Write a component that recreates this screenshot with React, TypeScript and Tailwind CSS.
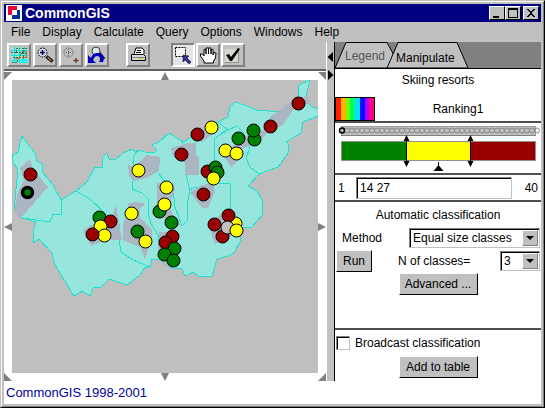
import React from "react";

const RED = "#990000";
const GREEN = "#008000";
const YELLOW = "#ffff00";

const menus = ["File", "Display", "Calculate", "Query", "Options", "Windows", "Help"];

const raised = "border-2 border-t-white border-l-white border-r-[#808080] border-b-[#808080] bg-[#c0c0c0]";
const pushButton =
  "flex h-[22px] items-center justify-center border border-t-white border-l-white border-r-black border-b-black bg-[#c0c0c0] px-1 whitespace-nowrap";
const sunken =
  "border border-t-[#808080] border-l-[#808080] border-r-[#c0c0c0] border-b-[#c0c0c0] bg-white shadow-[inset_1px_1px_0_black]";

const dots: [number, number, string][] = [
  [30, 174, RED],
  [99, 217, GREEN],
  [110, 221, RED],
  [100, 226, YELLOW],
  [104, 235, YELLOW],
  [92, 234, RED],
  [131, 213, YELLOW],
  [137, 231, GREEN],
  [145, 241, YELLOW],
  [138, 170, YELLOW],
  [166, 187, YELLOW],
  [159, 211, GREEN],
  [164, 204, YELLOW],
  [171, 222, GREEN],
  [172, 236, RED],
  [165, 242, RED],
  [174, 248, GREEN],
  [164, 254, GREEN],
  [173, 260, GREEN],
  [181, 154, RED],
  [197, 134, RED],
  [211, 127, YELLOW],
  [238, 138, GREEN],
  [254, 139, GREEN],
  [253, 130, GREEN],
  [270, 126, RED],
  [298, 103, RED],
  [225, 150, YELLOW],
  [236, 153, YELLOW],
  [207, 171, RED],
  [215, 167, GREEN],
  [217, 172, GREEN],
  [213, 178, YELLOW],
  [203, 194, RED],
  [235, 223, YELLOW],
  [228, 215, RED],
  [214, 224, RED],
  [222, 236, RED],
  [227, 227, "#c0c0c0"],
  [236, 230, YELLOW],
];

const land =
  "22,136 27,143 35,153 37,161 42,164 43,173 53,185 61,200 76,191 87,182 95,167 102,167 102,158 107,153 109,159 115,160 123,153 133,149 136,153 140,150 147,153 155,152 157,150 152,145 159,142 169,133 183,142 197,134 218,122 228,117 230,107 235,102 244,105 257,110 280,112 298,96 299,85 310,80 305,100 312,107 318,109 318,116 303,122 301,133 286,142 289,145 288,153 278,167 259,174 248,186 257,191 262,200 262,215 252,227 243,228 240,235 240,242 234,253 228,256 217,259 212,276 198,276 193,272 185,276 182,269 172,268 163,263 160,259 152,259 150,267 145,267 140,275 127,285 109,279 101,287 93,288 90,296 82,291 74,296 55,265 52,253 39,239 33,243 33,232 36,222 20,217 14,210 18,169 13,163 12,156 18,152 20,143";

const patches = [
  "20,168 30,159 33,169 48,187 20,219 14,212 18,192 24,180",
  "128,165 134,167 146,155 160,157 159,171 146,178 133,181 129,175",
  "171,148 178,146 187,143 196,143 196,156 199,157 199,175 185,175 185,163 173,157",
  "196,140 202,142 215,132 219,124 205,127",
  "225,150 237,143 250,133 263,131 270,117 298,97 309,97 309,103 293,110 283,125 267,133 260,140 240,150 238,160 231,167 225,157",
  "190,192 202,185 213,183 215,192 208,208 202,208",
  "128,203 137,202 146,204 140,208 140,217 152,230 152,240 145,259 140,247 123,240 123,223 128,212",
  "157,183 173,183 175,190 170,203 172,213 180,225 172,229 160,213 157,205",
  "83,230 92,225 112,216 116,205 118,215 122,240 105,240 91,246",
  "159,232 175,232 180,250 178,265 165,266 158,255",
  "208,223 220,215 240,222 240,232 227,238 215,244",
];

const borders = [
  "61,200 61,214 53,214 50,222 36,220 22,218",
  "76,191 90,199 105,213 117,226 119,240 121,252 133,260 150,267",
  "137,150 133,158 134,165",
  "133,181 132,189 142,193 148,199 148,213 151,224 158,235 160,250",
  "158,173 167,184 173,189 175,207 182,226 187,221 187,205 190,190 186,175",
  "182,142 185,149",
  "190,190 195,187 202,189 212,183 230,184 231,213",
  "218,122 228,130 215,138 214,165",
  "221,133 237,126 243,132 250,147 246,158 250,167 259,174",
];

function MapCanvas() {
  return (
    <svg viewBox="12 80 306 293" className="block h-full w-full bg-[#bfbfbf]" role="img" aria-label="Map">
      <g shapeRendering="crispEdges">
        <polygon points={land} fill="#96e6de" stroke="#20e0d0" />
        {borders.map((p) => (
          <polyline key={p} points={p} fill="none" stroke="#20e0d0" />
        ))}
        {patches.map((p) => (
          <polygon key={p} points={p} fill="#acb6c2" />
        ))}
      </g>
      {dots.map(([x, y, c], i) => (
        <circle key={i} cx={x + 0.5} cy={y + 0.5} r="6.5" fill={c} stroke="black" />
      ))}
      <circle cx="27.5" cy="192.5" r="5" fill={GREEN} stroke="black" strokeWidth="3.5" />
    </svg>
  );
}

function Arrow({ points }: { points: string }) {
  return (
    <svg viewBox="0 0 8 8" className="h-2 w-2" aria-hidden="true">
      <polygon points={points} fill="#808080" />
    </svg>
  );
}

function MapPanel() {
  return (
    <div className="grid min-h-0 flex-1 grid-cols-[8px_1fr_8px] grid-rows-[9px_minmax(0,1fr)_8px] items-center justify-items-center border-t-2 border-[#606060] bg-white">
      <Arrow points="0,0 8,0 0,8" />
      <Arrow points="4,0 8,8 0,8" />
      <Arrow points="0,0 8,0 8,8" />
      <Arrow points="0,4 8,0 8,8" />
      <MapCanvas />
      <Arrow points="0,0 8,4 0,8" />
      <Arrow points="0,0 8,8 0,8" />
      <Arrow points="0,0 8,0 4,8" />
      <Arrow points="8,0 8,8 0,8" />
    </div>
  );
}

function Tool({ label, pressed, children }: { label: string; pressed?: boolean; children: React.ReactNode }) {
  return (
    <button
      aria-label={label}
      className={
        "flex h-6 w-6 items-center justify-center " +
        (pressed ? "border-2 border-t-[#808080] border-l-[#808080] border-r-white border-b-white bg-[#e4e4e4]" : raised)
      }
    >
      <svg viewBox="0 0 18 18" className="h-[18px] w-[18px]" aria-hidden="true">
        {children}
      </svg>
    </button>
  );
}

function Toolbar() {
  return (
    <div className="flex h-[27px] items-start px-[3px] pt-px">
      <div className="flex gap-0.5">
        <Tool label="Full extent">
          <rect x="1" y="1" width="16" height="16" fill="#b4d4d0" />
          <g shapeRendering="crispEdges">
            <path d="M1 4.5h16M1 9.5h16M1 14.5h9M4.5 1v16M9.5 1v16M14.5 1v9" stroke="#00e8e8" />
            <path d="M1 6.5h5v-4h4M12 2.5h5M3 11.5h7v-4h3v5M6 6.5h7v-3M2 16.5h5v-3M12 7.5h5" fill="none" stroke="#207850" strokeDasharray="2 1" />
            <path d="M12 5.500h4v6h-4M5 12.500h4v-3" fill="none" stroke="#a07818" />
            <rect x="11" y="13" width="6" height="4" fill="#00ffff" />
          </g>
        </Tool>
        <Tool label="Zoom in">
          <circle cx="6.5" cy="6.5" r="4.5" fill="#d8d8e8" stroke="black" strokeDasharray="2 1" />
          <path d="M4 6.5h5M6.5 4v5" stroke="#000060" strokeWidth="1.5" />
          <path d="M10.500 10.500l6 5" stroke="black" strokeWidth="3.500" />
          <path d="M11.500 11l4 4" stroke="#c08050" strokeWidth="1.500" />
        </Tool>
        <Tool label="Zoom out">
          <circle cx="6.5" cy="6.5" r="4.5" fill="none" stroke="#404050" strokeDasharray="1 1" />
          <path d="M4 6.5h5M6.5 3v7" stroke="#606070" strokeDasharray="1 1" />
          <path d="M11.500 14.500h5M14 12v5" stroke="#704028" strokeWidth="1.5" />
        </Tool>
        <Tool label="Undo zoom">
          <path d="M11 7l5 6" stroke="black" strokeWidth="3" />
          <circle cx="8" cy="5" r="4" fill="#d8e8e8" stroke="#404040" />
          <path d="M0 9v8h8l-3-3c1-2 2-4 4-4 3 0 4 3 2 6h4c2-4 0-9-5-9-4 0-6 2-7 5z" fill="#0000b8" />
        </Tool>
      </div>
      <div className="ml-[17px] flex">
        <Tool label="Print">
          <path d="M5 8L7 2h6l2 2v4" fill="white" stroke="black" />
          <path d="M8 4.5h4M7 6.5h5" stroke="black" />
          <path d="M2.5 8.5h12l2 2v4h-14z" fill="#d8d8d8" stroke="black" />
          <path d="M3 11.5h13" stroke="#808080" />
          <path d="M10 12.5h4" stroke="#d0d000" />
        </Tool>
      </div>
      <div className="ml-[21px] flex gap-px">
        <Tool label="Select" pressed>
          <rect x="1.5" y="1.5" width="10" height="9" fill="#f4f4f4" stroke="black" strokeDasharray="2 1" />
          <path d="M9 9l6 1-2 2 4 4-2 2-4-4-2 2z" fill="#3030a0" stroke="black" strokeWidth="0.5" />
        </Tool>
        <Tool label="Pan">
          <path
            d="M5 17v-2L1.5 10V8h2L5 10V3.5h2V8 2h2.5v6V2H12v6-4.5h2V9l1-2.5 2 .5-.5 5-2 3v2z"
            fill="white"
            stroke="black"
            strokeLinejoin="round"
          />
        </Tool>
        <Tool label="Apply">
          <rect x="1" y="3" width="13" height="13" fill="#d8d8d0" />
          <path d="M14.5 3v13.5H1" fill="none" stroke="#909090" />
          <path d="M2 9l3-1 2 3 7-9 2 1-8 12H6z" fill="black" />
        </Tool>
      </div>
    </div>
  );
}

function WindowButton({ label, children }: { label: string; children: React.ReactNode }) {
  return (
    <button aria-label={label} className="h-3.5 w-4 border border-t-white border-l-white border-r-black border-b-black bg-[#c0c0c0]">
      <svg viewBox="0 0 14 12" className="block h-3 w-3.5" shapeRendering="crispEdges" aria-hidden="true">
        {children}
      </svg>
    </button>
  );
}

function TitleBar() {
  return (
    <header className="flex h-[18px] items-center bg-[#000080] px-0.5">
      <svg viewBox="0 0 16 16" className="h-4 w-4" shapeRendering="crispEdges" aria-hidden="true">
        <rect width="16" height="16" fill="white" />
        <path d="M2 1h9v4H6v5H2z" fill="#f00038" />
        <path d="M11 5h3v9H6v-4h5z" fill="#003098" />
      </svg>
      <h1 className="ml-[3px] flex-1 text-[14px] leading-[18px] font-bold text-white">CommonGIS</h1>
      <WindowButton label="Minimize">
        <rect x="3" y="9" width="6" height="2" />
      </WindowButton>
      <WindowButton label="Maximize">
        <path d="M2 1h10v10H2zM3 3v7h8V3z" fillRule="evenodd" />
      </WindowButton>
      <div className="ml-0.5 flex">
        <WindowButton label="Close">
          <path d="M3 2h2v1h1v1h2V3h1V2h2v1h-1v1H9v1H8v2h1v1h1v1h1v1H9V9H8V8H6v1H5v1H3V9h1V8h1V7h1V5H5V4H4V3H3z" />
        </WindowButton>
      </div>
    </header>
  );
}

const stripe = ["#ff2000", "#ffb000", "#70ff00", "#00ff60", "#00e0ff", "#0010ff", "#b000ff", "#ff0080"];
const ranks = Array.from({ length: 40 }, (_, i) => 7 + i * 5);

function ClassSlider() {
  return (
    <svg viewBox="0 0 206 50" className="block w-full" role="img" aria-label="Class breaks">
      <rect x="6.5" y="3.5" width="194" height="9" fill="#c0c0c0" stroke="#a0a0a0" />
      <path d="M6 12.5h195" stroke="#808080" />
      {ranks.map((x) => (
        <circle key={x} cx={x} cy="7.5" r="2.5" fill="none" stroke="#868686" />
      ))}
      <circle cx="7" cy="7.5" r="2.5" fill="none" stroke="black" strokeWidth="1.5" />
      <g shapeRendering="crispEdges">
        <rect x="6" y="18" width="195" height="20" fill="#909090" />
        <rect x="7" y="19" width="65" height="18" fill={GREEN} />
        <rect x="72" y="19" width="64" height="18" fill={YELLOW} />
        <rect x="136" y="19" width="64" height="18" fill={RED} />
      </g>
      {[71.5, 135.5].map((x) => (
        <g key={x} transform={`translate(${x} 0)`}>
          <path d="M0 14v29" stroke="black" />
          <path d="M0 12l3 6h-6zM0 44l3-6h-6z" />
        </g>
      ))}
      <path d="M103.5 39v4" stroke="black" />
      <path d="M103.5 42l5 6h-10z" />
    </svg>
  );
}

function Tabs() {
  return (
    <div className="relative h-[27px] border-b border-black bg-[#808080]" role="tablist">
      <svg viewBox="0 0 134 26" className="absolute top-0 left-0 h-[26px] w-[134px]" aria-hidden="true">
        <path d="M0 26L11 .5h41L66 26z" fill="#c0c0c0" stroke="black" />
        <path d="M52 26L63 .5h59L133 26z" fill="#c0c0c0" stroke="black" />
      </svg>
      <div className="relative flex pl-[9px]">
        <button role="tab" aria-selected="false" className="h-[27px] w-[42px] text-[#555]">
          Legend
        </button>
        <button role="tab" aria-selected="true" className="ml-2.5 h-[27px] pt-1">
          Manipulate
        </button>
      </div>
    </div>
  );
}

function DropDown({ id, value, className }: { id: string; value: string; className: string }) {
  return (
    <div className={`relative h-5 p-px ${sunken} ${className}`}>
      <select id={id} className="block h-4 w-full appearance-none bg-white pr-4 pl-0.5 leading-4 outline-none">
        <option>{value}</option>
      </select>
      <span className="pointer-events-none absolute top-px right-px flex h-4 w-4 items-center justify-center border border-t-white border-l-white border-r-[#808080] border-b-[#808080] bg-[#c0c0c0]">
        <svg viewBox="0 0 8 4" className="h-1 w-2" aria-hidden="true">
          <path d="M0 0h8L4 4z" />
        </svg>
      </span>
    </div>
  );
}

function ManipulatePanel() {
  return (
    <aside className="flex w-[207px] flex-col border-l border-black bg-white">
      <Tabs />
      <h2 className="pt-[3px] text-center leading-4">Skiing resorts</h2>
      <div className="mt-[9px] flex h-6 items-center">
        <div className="flex h-6 w-10 border border-black">
          {stripe.map((c) => (
            <span key={c} className="flex-1" style={{ backgroundColor: c }} />
          ))}
        </div>
        <p className="flex-1 text-center">Ranking1</p>
      </div>
      <div className="border-y-2 border-[#505050]">
        <ClassSlider />
      </div>
      <div className="flex h-[27px] items-center border-b-2 border-[#505050] px-[3px]">
        <label htmlFor="breaks" className="w-[18px]">
          1
        </label>
        <input id="breaks" defaultValue="14 27" className={`h-[22px] w-[156px] pl-[3px] outline-none ${sunken}`} />
        <span className="flex-1 text-right">40</span>
      </div>
      <section className="flex-1 border-b-2 border-[#505050] px-px">
        <h3 className="pt-1 text-center leading-[18px]">Automatic classification</h3>
        <div className="mt-1 flex h-5 items-center">
          <label htmlFor="method" className="flex-1 pl-1.5">
            Method
          </label>
          <DropDown id="method" value="Equal size classes" className="w-[131px]" />
        </div>
        <div className="mt-px flex h-6 items-center">
          <button className={pushButton + " w-9"}>Run</button>
          <label htmlFor="count" className="ml-[26px] flex-1">
            N of classes=
          </label>
          <DropDown id="count" value="3" className="w-10" />
        </div>
        <button className={pushButton + " mx-auto w-[79px]"}>Advanced ...</button>
      </section>
      <section className="h-[51px] px-px pt-1">
        <label className="flex h-[18px] items-center gap-[5px]">
          <input type="checkbox" className={`h-3.5 w-3.5 appearance-none ${sunken}`} />
          Broadcast classification
        </label>
        <button className={pushButton + " mx-auto mt-1 w-[79px]"}>Add to table</button>
      </section>
    </aside>
  );
}

export default function App() {
  return (
    <div className="h-screen border border-t-[#c0c0c0] border-r-black border-b-black border-l-[#c0c0c0] font-['Liberation_Sans',Arial,sans-serif] text-[12px] leading-4 text-black">
      <div className="h-full border border-t-white border-r-[#808080] border-b-[#808080] border-l-white">
        <div className="flex h-full flex-col border-2 border-[#c0c0c0] bg-[#c0c0c0]">
          <TitleBar />
          <nav className="flex h-5 items-center gap-3 pl-[7px]">
            {menus.map((m) => (
              <button key={m}>{m}</button>
            ))}
          </nav>
          <main className="flex min-h-0 flex-1">
            <div className="flex min-w-0 flex-1 flex-col">
              <Toolbar />
              <MapPanel />
            </div>
            <div className="flex w-2 flex-col items-center gap-2 border-l border-white pt-2.5">
              <svg viewBox="0 0 7 10" className="h-2.5 w-[7px]" aria-hidden="true">
                <path d="M0.5 5L6 0v10z" />
              </svg>
              <svg viewBox="0 0 7 10" className="h-2.5 w-[7px]" aria-hidden="true">
                <path d="M1 0l5.5 5L1 10z" />
              </svg>
            </div>
            <ManipulatePanel />
          </main>
          <footer className="h-[23px] bg-white pl-0.5 text-[13px] leading-[23px] text-[#0000a0]">CommonGIS 1998-2001</footer>
        </div>
      </div>
    </div>
  );
}
